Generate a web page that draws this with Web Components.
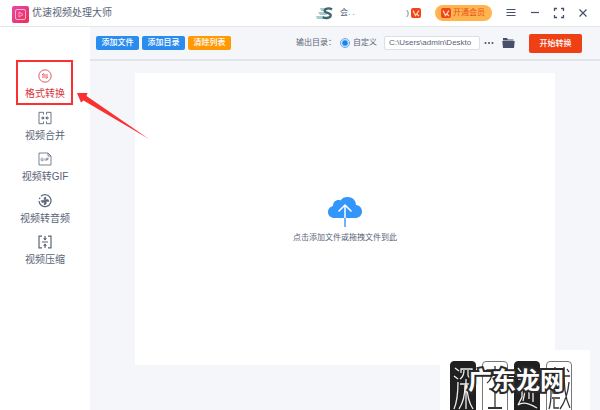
<!DOCTYPE html>
<html lang="zh-CN">
<head>
<meta charset="utf-8">
<title>优速视频处理大师</title>
<style>
html,body{height:100%;margin:0}
body{font-family:"Liberation Sans","Noto Sans CJK SC",sans-serif;color:#5a6478;background:#f4f6f9}
</style>
</head>
<body>
<video-app></video-app>
<script>
const define = (name, html) => customElements.define(name, class extends HTMLElement {
  constructor() {
    super();
    const t = document.createElement('template');
    t.innerHTML = html;
    this.attachShadow({mode: 'open'}).append(t.content.cloneNode(true));
  }
});

const ICONS = {
  convert: '<g stroke-width=".8"><circle cx="7" cy="7" r="6.200"/><path d="M10 6H4.200L6 4.200M4 8h5.800L8 9.800"/></g>',
  merge: '<path stroke-width=".9" d="M5.500 3.500V1.300H1v11.400h4.500v-2.200M8.500 3.500V1.300H13v11.400H8.500v-2.200M3 7h3M11 7H8"/><path fill="currentColor" stroke="none" d="m4.500 5 2.200 2-2.200 2zM9.500 5 7.300 7l2.200 2z"/>',
  gif: '<path stroke-width=".8" d="M10 1H1v12h12V4zM10 1v3h3"/><path stroke-width=".7" d="M5.200 6.500c-.9-.7-2.200-.3-2.200 1s1.300 1.600 2.200.8v-.7h-.8M7 6.200v2.600M8.700 8.800V6.200h2M8.700 7.500h1.600"/>',
  audio: '<path stroke-width="1.200" d="M3 2.200A6 6 0 1 1 1 7M1.200 5 2.200 3.600"/><path fill="currentColor" stroke-width=".3" d="M7 6.300C5 5 6 3 8 3L7.700 6.300C9 4.500 11 5.500 11 7.500L7.700 7.700C9.500 9 8 11 6 11L6.300 7.700C5 9.500 3 8.500 3 6.500L6.300 6.300z"/>',
  compress: '<path stroke-width="1.200" d="M4 1.200H1v11.600h3M10 1.200h3v11.600h-3M4 7h6M7 1v4M7 13V9"/><path fill="currentColor" stroke="none" d="M5 3.200h4L7 5.600zM5 10.800h4L7 8.400z"/>'
};

customElements.define('nav-item', class extends HTMLElement {
  constructor() {
    super();
    this.attachShadow({mode: 'open'}).innerHTML = `<style>
      :host{display:block}
      a{display:flex;flex-direction:column;align-items:center;gap:4px;color:inherit;text-decoration:none;font-size:10px;line-height:14px;white-space:nowrap}
      svg{width:14px;height:14px}
      :host([active]){color:#d9333c}
      </style><a href="#"><svg viewBox="0 0 14 14" fill="none" stroke="currentColor">${ICONS[this.getAttribute('icon')]}</svg><slot></slot></a>`;
  }
});

customElements.define('tool-button', class extends HTMLElement {
  constructor() {
    super();
    this.attachShadow({mode: 'open'}).innerHTML = `<style>
      :host{display:block}
      button{display:block;border:0;border-radius:2px;background:#2b8cf0;color:#fff;font:inherit;font-size:8px;font-weight:500;line-height:14px;padding:0 4px;height:14px;min-width:43px;white-space:nowrap}
      :host([tone=orange]) button{background:#ff9a05}
      :host([tone=red]) button{background:#ef4015;height:19px;line-height:19px;min-width:53px}
      </style><button type="button"><slot></slot></button>`;
  }
});

define('vip-mark', `<style>:host{display:block;width:10px;height:10px}svg{display:block}</style>
<svg width="10" height="10" viewBox="0 0 10 10"><rect width="10" height="10" rx="2" fill="#f0441c"/><path d="M2 2.500 4.500 7.500 8 2.500M5.500 5.800 8 8" fill="none" stroke="#ffd9b0" stroke-width="1.300"/></svg>`);

define('title-bar', `<style>
:host{display:flex;align-items:center;height:26px;background:#fff;border-bottom:1px solid #e3e5e8;padding:0 10px 0 12px}
.logo{width:17px;height:17px;margin:2px 3px 0 0;flex:none}
h1{font-size:10px;line-height:16px;font-weight:400;margin:0;flex:1;white-space:nowrap}
.user{display:flex;align-items:center;width:105px;font-size:8px;line-height:14px}
.user vip-mark{margin-left:2px}
.user span{margin-left:6px;flex:1}
.vip{display:flex;align-items:center;gap:2px;margin:0 12px 0 14px;height:16px;border:0;border-radius:8px;background:#ffb44d;color:#e8511c;font:inherit;font-size:8px;line-height:16px;padding:0 6px;width:57px;white-space:nowrap;box-sizing:border-box}
.win{display:flex;gap:10px}
.win button{border:0;padding:0;background:none;color:#46506a;width:14px;height:14px}
.win svg{display:block}
</style>
<svg class="logo" viewBox="0 0 17 17"><defs><linearGradient id="g" x2="1" y2="1"><stop stop-color="#e448a8"/><stop offset="1" stop-color="#f02d55"/></linearGradient></defs><rect width="17" height="17" rx="2" fill="url(#g)"/><rect x="3.500" y="3.500" width="10" height="10" rx="1.500" fill="none" stroke="#ffb0cc"/><path d="M7 6v5l4-2.500z" fill="none" stroke="#ffb0cc" stroke-width=".9"/></svg>
<h1>优速视频处理大师</h1>
<div class="user"><svg width="18" height="13" viewBox="0 0 18 13"><path d="M4 1h8L9 4H5zM2 5h7l2 3H4zM0 9h8l2 3H1z" fill="#a7cdd0"/><path d="M16 2.500C13 .5 8.500 1.500 8.700 4c.2 2.300 6.300 1.700 6 4.500-.2 2.500-4.500 3-8 1.800" fill="none" stroke="#3d6670" stroke-width="2.400"/></svg><span>会. .</span>)<vip-mark></vip-mark></div>
<button class="vip" type="button"><vip-mark></vip-mark>开通会员</button>
<div class="win">
<button type="button" aria-label="菜单"><svg width="14" height="14" fill="none" stroke="currentColor" stroke-width="1.200"><path d="M2.500 3.500h9M2.500 6.500h9M2.500 9.500h9"/></svg></button>
<button type="button" aria-label="最小化"><svg width="14" height="14" fill="none" stroke="currentColor" stroke-width="1.200"><path d="M3 6.500h8"/></svg></button>
<button type="button" aria-label="最大化"><svg width="14" height="14" fill="none" stroke="currentColor" stroke-width="1.300"><path d="M5 2.500H2.500V5M9 2.500h2.500V5M5 11.500H2.500V9M9 11.500h2.500V9"/></svg></button>
<button type="button" aria-label="关闭"><svg width="14" height="14" fill="none" stroke="currentColor" stroke-width="1.200"><path d="m3.500 3.500 7 7M10.500 3.500l-7 7"/></svg></button>
</div>`);

define('tool-bar', `<style>
:host{display:flex;align-items:center;gap:3px;height:32px;padding:0 18px 0 6px;border-bottom:2px solid #e1e4e8;font-size:8px;line-height:14px;white-space:nowrap}
.out{margin-left:auto;display:flex;align-items:center}
label{display:flex;align-items:center;gap:3px;margin-left:4px}
input[type=radio]{appearance:none;width:10px;height:10px;margin:0;border:1px solid #5aa8f5;border-radius:50%;background:radial-gradient(circle,#1c82ee 2px,#fff 4px)}
input[type=text]{width:96px;height:14px;box-sizing:border-box;margin:0 4px 0 7px;border:1px solid #dcdfe5;border-radius:2px;padding:0 4px;background:#fff;color:inherit;font:inherit}
.icon{border:0;background:none;padding:0;color:#46506a;height:14px}
.icon svg{display:block}
.folder{margin:0 14px 0 8px}
</style>
<tool-button>添加文件</tool-button><tool-button>添加目录</tool-button><tool-button tone="orange">清除列表</tool-button>
<div class="out"><span>输出目录：</span><label><input type="radio" name="dir" checked>自定义</label>
<input type="text" aria-label="输出目录" value="C:\\Users\\admin\\Deskto">
<button class="icon" type="button" aria-label="浏览"><svg width="10" height="14" fill="currentColor"><circle cx="1.500" cy="7" r="1"/><circle cx="5" cy="7" r="1"/><circle cx="8.500" cy="7" r="1"/></svg></button>
<button class="icon folder" type="button" aria-label="打开文件夹"><svg width="13" height="14" fill="currentColor"><path d="M1 2h4l1 1.500h5.500V4.500H1zM.3 5h12.400L12 12H1z"/></svg></button>
<tool-button tone="red">开始转换</tool-button></div>`);

define('drop-zone', `<style>
:host{display:flex;flex-direction:column;align-items:center;justify-content:center;gap:4px;background:#fff;font-size:8px;line-height:14px;white-space:nowrap}
svg{display:block;margin-top:2px}
</style>
<svg width="36" height="32" viewBox="0 0 36 32"><path d="M8 23C3.500 23 1 20.500 1 17c0-3.500 2.500-5.500 5-6C6 6.500 10 4 13.500 5.500 15 3 17.500 2 20.500 2c5 0 8.500 3.500 8.500 8 3.500.3 6 3 6 6.500 0 4-3 6.500-7 6.500z" fill="#3296fa"/><path d="M18 11v12M11.500 16.500 18 10l6.500 6.500" fill="none" stroke="#fff" stroke-width="1.500"/><path d="M18 23v9" stroke="#6db5fb" stroke-width="2"/></svg>
<span>点击添加文件或拖拽文件到此</span>`);

define('site-watermark', `<style>
:host{display:block;width:150px;height:60px;background:#fff;overflow:hidden}
.tiles{display:flex;gap:6px;padding:11px 0 0 10px}
.tiles span{width:26px;height:60px;box-sizing:border-box;border:1px solid #777;border-radius:4px}
.tiles span:nth-child(odd){background:#202020;border-color:#202020}
.tiles svg{display:block;width:24px;height:50px}
.name{position:absolute;left:28px;top:17px;font-size:24px;line-height:28px;font-weight:700;color:#fff;-webkit-text-stroke:4px #2a2a2a;paint-order:stroke fill;white-space:nowrap}
</style>
<div class="tiles" role="img" aria-label="深空遊戲">
<span><svg viewBox="0 0 24 50" fill="none" stroke="#eee" stroke-width="1.300"><path d="m4 6 4 3M3 14l4 3M7 20C7 32 6 40 3 47M10 11V7h11v4M13 8c0 5-1 7-4 9M17 8v5q0 3 5 3M9 22h13M15 17v30M14 23c0 10-2 18-6 24M16 23c0 10 2 18 6 24"/></svg></span>
<span><svg viewBox="0 0 24 50" fill="none" stroke="#333" stroke-width="1.300"><path d="M12 4v4M4 13V8h16v5M9 9c0 7-2 10-5 12M15 9v7q0 4 5 4M6 27h12M12 27v19"/><path stroke-width="2" d="M5 46h14"/></svg></span>
<span><svg viewBox="0 0 24 50" fill="none" stroke="#eee" stroke-width="1.300"><path d="m3 6 3 4M3 17h4v18l-4 8q6-5 19 3M12 5v5M8 11h7M11 11c0 10-1 20-3 28M10 20h4v17M17 6l-2 7M16 11h6M16 18h5l-3 5v17M15 28h7"/></svg></span>
<span><svg viewBox="0 0 24 50" fill="none" stroke="#333" stroke-width="1.300"><path d="M8 5v10M8 9h4M3 15h10M4 15v17c0 8-1 12-2 15M5 20h7M6 24h5v7H6zM5 36h8M7 37v9h5M14 14h9M17 5c0 20 1 31 6 41M22 20c-1 12-4 20-9 27M20 7l2 3"/></svg></span>
</div>
<div class="name">广东龙网</div>`);

define('video-app', `<style>
:host{display:flex;flex-direction:column;min-height:100vh;position:relative;overflow:hidden}
.body{display:flex;flex:1}
aside{flex:0 0 90px;background:#fff}
nav{display:grid;grid-auto-rows:1fr;min-height:208px;padding-top:42px}
main{flex:1;min-width:0;display:flex;flex-direction:column}
drop-zone{flex:1;margin:12px 45px 45px}
.mark{position:absolute;left:16px;top:60px;width:57px;height:45px;box-sizing:border-box;border:2px solid #fb3030}
.arrow{position:absolute;left:77px;top:92px}
site-watermark{position:absolute;right:10px;bottom:0}
</style>
<title-bar></title-bar>
<div class="body">
<aside><nav><nav-item icon="convert" active>格式转换</nav-item><nav-item icon="merge">视频合并</nav-item><nav-item icon="gif">视频转GIF</nav-item><nav-item icon="audio">视频转音频</nav-item><nav-item icon="compress">视频压缩</nav-item></nav></aside>
<main><tool-bar></tool-bar><drop-zone></drop-zone></main>
</div>
<div class="mark"></div>
<svg class="arrow" width="72" height="48"><path d="M0 1 10.500 1 9.500 4 72 47 6.500 8.500 4 10.500z" fill="#fb3030"/></svg>
<site-watermark></site-watermark>`);
</script>
</body>
</html>
